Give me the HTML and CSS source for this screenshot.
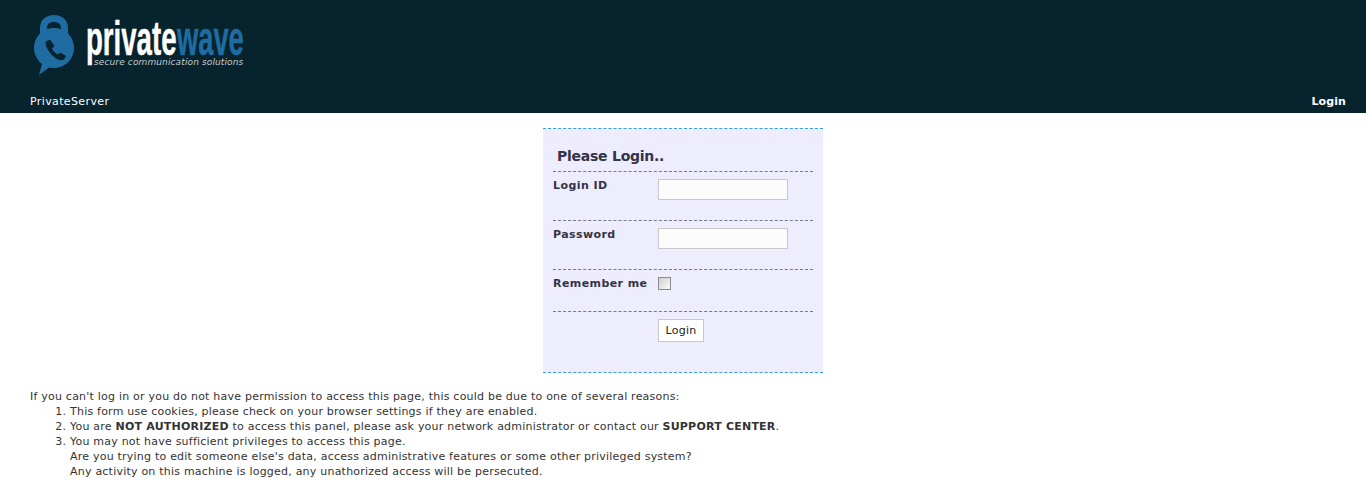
FILE: index.html
```html
<!DOCTYPE html>
<html lang="en">
<head>
    <meta charset="UTF-8">
    <title>PrivateServer - Login</title>
    <link rel="stylesheet" href="styles.css">
</head>
<body>
    <div class="header">
        <div class="logo">
            <svg class="logo-icon" width="40" height="60" viewBox="0 0 40 60">
                <path fill="#1f6ca3" fill-rule="evenodd" d="M6 18.500 V13 C6 5 12 0 20 0 C28 0 34 5 34 13 V18.500 C37.500 22 40 27 40 33 C40 44 31 53 20 53 C18 53 16.500 52.800 15 52.400 L5 60 L8 49 C3 45 0 39 0 33 C0 27 2.500 22 6 18.500 Z M13 14 C17 12.500 23 12.500 27 14 V13 C27 9 24 7 20 7 C16 7 13 9 13 13 Z"/>
                <path fill="#06232e" d="M12 26.500 L16 24.500 L20.500 31 L18 33.500 C19 36 21.500 38.500 24 39.500 L26.500 37.500 L32 41 L30 44.500 C26 46.500 21 43.500 17 39 C13 34.500 11 29.500 12 26.500 Z"/>
            </svg>
            <div class="logo-text">
                <div class="logo-name"><span class="logo-private">private</span><span class="logo-wave">wave</span></div>
                <div class="logo-tag">secure communication solutions</div>
            </div>
        </div>
        <div class="nav">
            <span class="nav-title">PrivateServer</span>
            <a href="#">Login</a>
        </div>
    </div>

    <form class="login-box">
        <h2>Please Login..</h2>
        <div class="form-row row-text">
            <label for="login-id">Login ID</label>
            <input type="text" id="login-id">
        </div>
        <div class="form-row row-text">
            <label for="password">Password</label>
            <input type="password" id="password">
        </div>
        <div class="form-row row-check">
            <label for="remember">Remember me</label>
            <input type="checkbox" id="remember">
        </div>
        <div class="form-row row-submit">
            <button type="button">Login</button>
        </div>
    </form>

    <div class="notes">
        <p>If you can't log in or you do not have permission to access this page, this could be due to one of several reasons:</p>
        <ol>
            <li>This form use cookies, please check on your browser settings if they are enabled.</li>
            <li>You are <b>NOT AUTHORIZED</b> to access this panel, please ask your network administrator or contact our <b>SUPPORT CENTER</b>.</li>
            <li>You may not have sufficient privileges to access this page.<br>
                Are you trying to edit someone else's data, access administrative features or some other privileged system?<br>
                Any activity on this machine is logged, any unathorized access will be persecuted.</li>
        </ol>
    </div>
</body>
</html>
```

FILE: styles.css
```css
* {
    margin: 0;
    padding: 0;
    box-sizing: border-box;
}
body {
    font-family: "DejaVu Sans", Verdana, sans-serif;
    font-size: 11px;
    line-height: 15px;
    letter-spacing: 0.22px;
    color: #333;
    background-color: #fff;
}

/* header */
.header {
    height: 113px;
    background-color: #06232e;
    color: #fff;
    padding: 15px 20px 0 30px;
}
.logo {
    display: flex;
    height: 73px;
    padding-left: 4px;
}
.logo-icon {
    flex: none;
}
.logo-text {
    position: relative;
    width: 160px;
    margin-left: 13px;
}
.logo-name {
    position: absolute;
    left: -1px;
    top: 8px;
    display: flex;
    font-family: "Liberation Sans", Arial, sans-serif;
    font-size: 30px;
    line-height: 20px;
    font-weight: bold;
    letter-spacing: 0;
    white-space: nowrap;
}
.logo-private {
    display: block;
    width: 91px;
    color: #fff;
    -webkit-text-stroke: 0.3px #fff;
    transform: scale(0.92, 1.6);
    transform-origin: left top;
}
.logo-wave {
    display: block;
    color: #1f6ca3;
    -webkit-text-stroke: 0.3px #1f6ca3;
    transform: scale(0.91, 1.6);
    transform-origin: left top;
}
.logo-tag {
    position: absolute;
    left: 7px;
    top: 41px;
    font-size: 9px;
    line-height: 12px;
    letter-spacing: 0.12px;
    font-style: italic;
    color: #c4ccd0;
    white-space: nowrap;
}
.nav {
    display: flex;
    justify-content: space-between;
    align-items: center;
    height: 15px;
    margin-top: 6px;
}
.nav-title {
    letter-spacing: 0.38px;
}
.nav a {
    color: #fff;
    font-weight: bold;
    letter-spacing: 0.1px;
    text-decoration: none;
}

/* login box */
.login-box {
    width: 280px;
    height: 245px;
    margin: 15px auto 0;
    padding: 0 10px;
    background-color: #eeedfd;
    border-top: 1px dashed #36a3e0;
    border-bottom: 1px dashed #36a3e0;
}
.login-box h2 {
    height: 42px;
    padding: 17px 0 0 4px;
    font-size: 14px;
    line-height: 20px;
    letter-spacing: -0.25px;
    font-weight: bold;
    color: #333348;
}
.form-row {
    display: flex;
    align-items: flex-start;
    border-top: 1px dashed #77778a;
}
.row-text {
    height: 49px;
    padding-top: 6px;
}
.row-check {
    height: 42px;
    padding-top: 6px;
}
.row-submit {
    padding: 7px 0 0 105px;
}
.form-row label {
    flex: none;
    width: 105px;
    font-weight: bold;
    letter-spacing: 0.42px;
    color: #333348;
}
.form-row input[type="text"],
.form-row input[type="password"] {
    width: 130px;
    height: 21px;
    margin-top: 1px;
    border: 1px solid #c8c8c8;
    background-color: #fcfcfc;
    outline: none;
}
.form-row input[type="checkbox"] {
    appearance: none;
    width: 13px;
    height: 13px;
    margin-top: 1px;
    border: 1px solid #8a8a8a;
    background: linear-gradient(135deg, #d0d0d0, #fbfbfb);
}
.row-submit button {
    width: 46px;
    height: 23px;
    border: 1px solid #c8c8c8;
    background-color: #fff;
    font-family: inherit;
    font-size: 11px;
    letter-spacing: 0.23px;
    color: #222;
}

/* notes under the form */
.notes {
    padding: 16px 30px 0;
}
.notes ol {
    padding-left: 40px;
}
```
